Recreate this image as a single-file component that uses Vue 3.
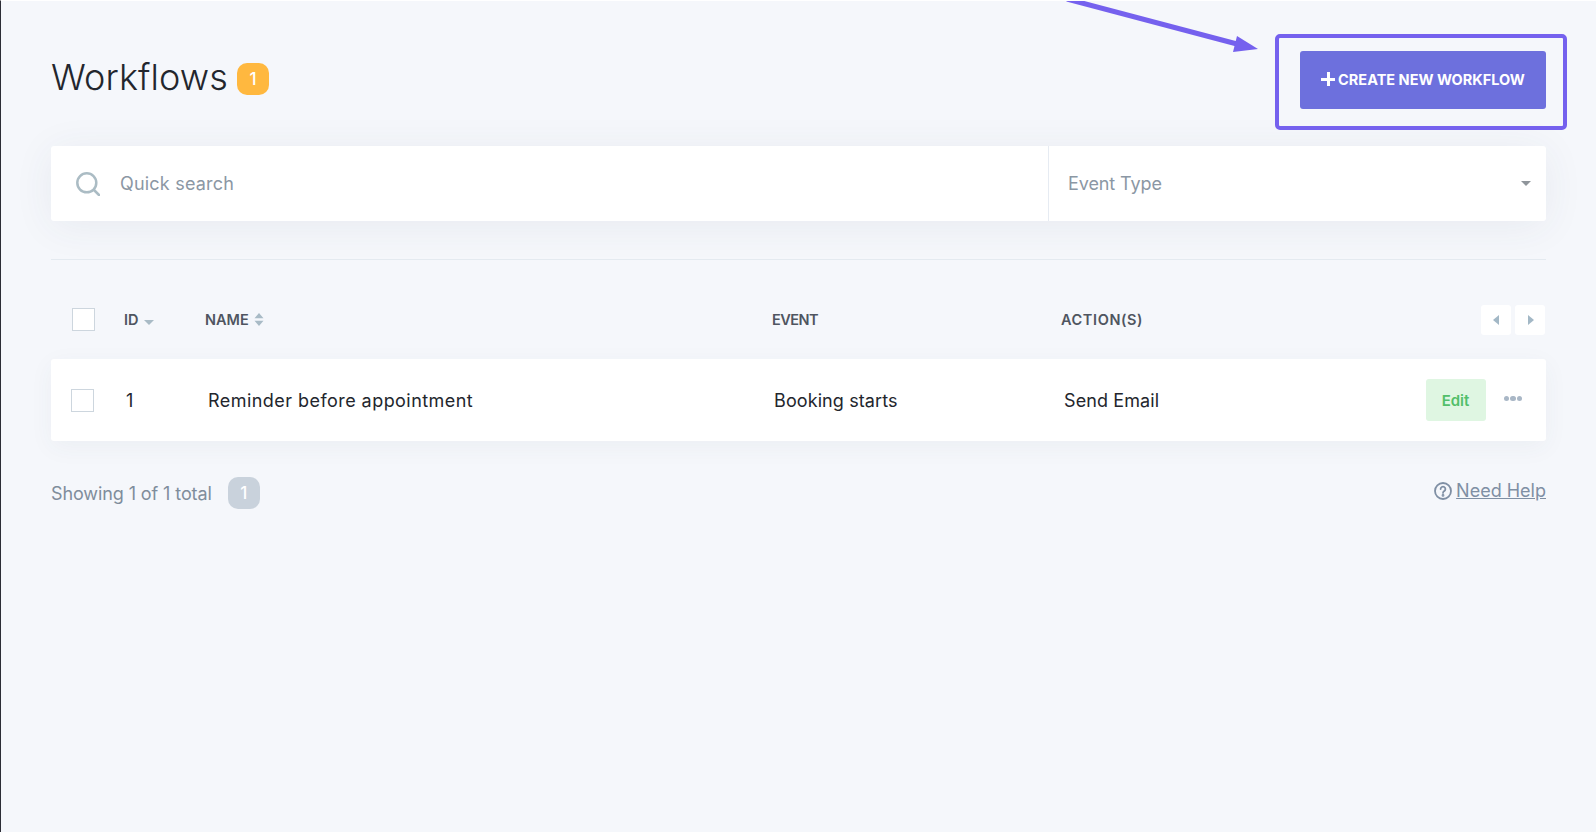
<script setup>
const row = { id: '1', name: 'Reminder before appointment', event: 'Booking starts', action: 'Send Email' }
</script>

<template>
  <div class="page">
    <header class="head">
      <div class="title-wrap">
        <h1 class="title">Workflows</h1>
        <span class="badge badge-amber">1</span>
      </div>
      <button class="create"><span class="plus"></span>CREATE NEW WORKFLOW</button>
    </header>

    <section class="filters">
      <div class="search">
        <svg class="search-icon" width="24" height="24" viewBox="0 0 24 24" fill="none" stroke="#abbcc4" stroke-width="2.5">
          <circle cx="10.8" cy="10.8" r="9.5" />
          <path d="M18 18l5 5" stroke-linecap="round" />
        </svg>
        <span class="placeholder quick">Quick search</span>
      </div>
      <div class="select">
        <span class="placeholder type">Event Type</span>
        <span class="caret"></span>
      </div>
    </section>

    <hr class="rule" />

    <div class="thead">
      <span class="check check-head"></span>
      <div class="th c-id">ID <span class="caret-sm"></span></div>
      <div class="th c-name">
        NAME
        <svg width="10" height="13" viewBox="0 0 10 13" fill="#a9bbc6"><path d="M5 0l4.5 5.2H.5zM5 13L.5 7.8h9z" /></svg>
      </div>
      <div class="th c-event">EVENT</div>
      <div class="th c-action">ACTION(S)</div>
      <div class="pager">
        <button class="page-btn"><svg width="7" height="10" viewBox="0 0 7 10" fill="#a3b8c6"><path d="M6 0v10L0 5z" /></svg></button>
        <button class="page-btn"><svg width="7" height="10" viewBox="0 0 7 10" fill="#a3b8c6"><path d="M1 0v10l6-5z" /></svg></button>
      </div>
    </div>

    <div class="trow">
      <span class="check check-row"></span>
      <div class="td c-id num">{{ row.id }}</div>
      <div class="td c-name">{{ row.name }}</div>
      <div class="td c-event">{{ row.event }}</div>
      <div class="td c-action">{{ row.action }}</div>
      <div class="actions">
        <button class="edit">Edit</button>
        <span class="dots"><i></i><i></i><i></i></span>
      </div>
    </div>

    <footer class="foot">
      <div class="count">
        <span class="count-text">Showing 1 of 1 total</span>
        <span class="badge badge-grey">1</span>
      </div>
      <a class="help">
        <svg width="18" height="18" viewBox="0 0 18 18" fill="none" stroke="#7f8fa4" stroke-width="1.8">
          <circle cx="9" cy="9" r="8" />
          <path d="M6.6 7a2.4 2.4 0 1 1 3.6 2.1c-.8.5-1.2.9-1.2 1.8" stroke-linecap="round" />
          <circle cx="9" cy="13.4" r=".5" fill="#7f8fa4" />
        </svg>
        <span class="help-text">Need Help</span>
      </a>
    </footer>

    <div class="annotation-box"></div>
    <svg class="annotation-arrow" width="220" height="60" viewBox="0 0 220 60">
      <path d="M8 -1L178 44" stroke="#7561ee" stroke-width="5" fill="none" />
      <path d="M199 49L178 36L174 52z" fill="#7561ee" />
    </svg>
  </div>
</template>

<style>
html, body { margin: 0; background: #f5f7fb; }
</style>

<style scoped>
.page {
  position: relative;
  box-sizing: border-box;
  height: 832px;
  overflow: hidden;
  padding: 0 50px 0 50px;
  border-left: 1px solid #2c2d36;
  border-top: 1px solid #ffffff;
  background: #f5f7fb;
  font-family: Inter, "Open Sans", sans-serif;
  color: #23262d;
}
.head {
  height: 145px;
  display: flex;
  justify-content: space-between;
  align-items: flex-start;
}
.title-wrap {
  display: flex;
  align-items: center;
  gap: 9px;
  margin-top: 56px;
}
.title {
  margin: 0;
  font-size: 36px;
  line-height: 40px;
  font-weight: 300;
  letter-spacing: .1px;
}
.badge {
  display: flex;
  align-items: center;
  justify-content: center;
  width: 32px;
  height: 32px;
  border-radius: 10px;
  color: #fff;
  font-size: 17px;
  font-weight: 500;
}
.badge-amber { background: #ffb83f; margin-top: 4px; }
.badge-grey { background: #c9d2dc; }
.create {
  display: flex;
  align-items: center;
  justify-content: center;
  gap: 3px;
  width: 246px;
  height: 58px;
  margin-top: 50px;
  padding: 0 0 2px;
  border: 0;
  border-radius: 3px;
  background: #6d70dd;
  color: #fff;
  font: 700 14.5px Inter, sans-serif;
}
.plus {
  position: relative;
  width: 14px;
  height: 14px;
  background:
    linear-gradient(#fff, #fff) center / 14px 3px no-repeat,
    linear-gradient(#fff, #fff) center / 3px 14px no-repeat;
}
.filters {
  display: flex;
  height: 75px;
  background: #fff;
  border-radius: 3px;
  box-shadow: 0 5px 40px rgba(60, 70, 100, .07);
}
.search {
  width: 998px;
  box-sizing: border-box;
  display: flex;
  align-items: center;
  gap: 20px;
  padding-left: 25px;
  border-right: 1px solid #e6ebf2;
}
.placeholder { font-size: 18px; color: #8b97a4; }
.quick { letter-spacing: .2px; }
.type { letter-spacing: -.1px; }
.select {
  flex: 1;
  display: flex;
  align-items: center;
  justify-content: space-between;
  padding: 0 15px 0 19px;
}
.caret {
  width: 0;
  height: 0;
  border-left: 5px solid transparent;
  border-right: 5px solid transparent;
  border-top: 5px solid #8f959b;
}
.rule {
  margin: 38px 0 0;
  border: 0;
  border-top: 1px solid #e4eaf0;
}
.thead {
  display: flex;
  align-items: center;
  height: 79px;
  padding-top: 20px;
  position: relative;
  font-size: 14px;
}
.check {
  box-sizing: border-box;
  width: 23px;
  height: 23px;
  background: #fff;
  border: 1px solid #cdd6de;
}
.check-head { margin-left: 21px; }
.check-row { margin-left: 20px; }
.th {
  display: flex;
  align-items: center;
  gap: 5px;
  font-weight: 600;
  color: #4f5560;
  font-size: 14.5px;
}
.c-id { position: absolute; left: 73px; }
.c-name { position: absolute; left: 154px; }
.c-event { position: absolute; left: 721px; letter-spacing: -.5px; }
.c-action { position: absolute; left: 1010px; letter-spacing: .6px; }
.trow .c-id { left: 75px; }
.trow .c-name { left: 157px; letter-spacing: .45px; }
.trow .c-event { left: 723px; letter-spacing: .1px; }
.trow .c-action { left: 1013px; letter-spacing: .1px; }
.caret-sm {
  width: 0;
  height: 0;
  margin-top: 5px;
  border-left: 5px solid transparent;
  border-right: 5px solid transparent;
  border-top: 5px solid #a9bbc6;
}
.pager {
  margin-left: auto;
  display: flex;
  gap: 4px;
  padding-right: 1px;
}
.page-btn {
  display: flex;
  align-items: center;
  justify-content: center;
  width: 30px;
  height: 30px;
  padding: 0;
  border: 0;
  border-radius: 3px;
  background: #fff;
}
.trow {
  position: relative;
  display: flex;
  align-items: center;
  height: 82px;
  background: #fff;
  border-radius: 3px;
  box-shadow: 0 6px 24px rgba(60, 70, 100, .05);
}
.td { font-size: 18px; color: #23262d; }
.actions {
  margin-left: auto;
  display: flex;
  align-items: center;
  gap: 18px;
  padding-right: 24px;
}
.edit {
  width: 60px;
  height: 42px;
  padding: 0;
  border: 0;
  border-radius: 3px;
  background: #dff6e2;
  color: #52bf6a;
  font: 600 15px Inter, sans-serif;
}
.dots { display: flex; gap: 1px; margin-top: -3px; }
.dots i {
  width: 5.5px;
  height: 5.5px;
  border-radius: 50%;
  background: #a9b7c6;
}
.foot {
  display: flex;
  justify-content: space-between;
  align-items: flex-start;
  margin-top: 36px;
}
.count {
  display: flex;
  align-items: center;
  gap: 16px;
  font-size: 18px;
  color: #7f8d9c;
}
.count-text { letter-spacing: -.1px; }
.help {
  display: flex;
  align-items: center;
  margin-top: 3px;
  color: #7f8fa4;
  font-size: 18px;
  text-decoration: underline;
  gap: 4px;
}
.annotation-box {
  position: absolute;
  left: 1274px;
  top: 33px;
  width: 292px;
  height: 96px;
  box-sizing: border-box;
  border: 4px solid #7561ee;
  border-radius: 5px;
}
.annotation-arrow {
  position: absolute;
  left: 1058px;
  top: -1px;
}
</style>
